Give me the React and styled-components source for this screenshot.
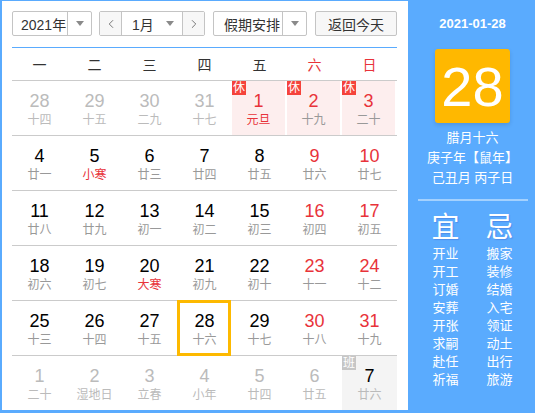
import React from 'react';
import styled, { createGlobalStyle, css } from 'styled-components';
import { ChevronLeft, ChevronRight } from 'lucide-react';

const FONT = '"Liberation Sans", Arial, "Noto Sans CJK SC", sans-serif';
const BLUE = '#5aabfe';
const RED = '#e8333a';

const GlobalStyle = createGlobalStyle`
  html, body {
    margin: 0;
    padding: 0;
    background: #fff;
    font-family: ${FONT};
  }
  * { box-sizing: border-box; }
`;

const Frame = styled.div`
  width: 535px;
  height: 413px;
  display: flex;
  border-left: 2px solid ${BLUE};
  border-top: 1px solid ${BLUE};
  border-bottom: 3px solid ${BLUE};
  overflow: hidden;
`;

const LeftPanel = styled.div`
  width: 406px;
  padding: 10px 11px 0 10px;
  display: flex;
  flex-direction: column;
`;

const Toolbar = styled.div`
  display: flex;
  height: 25px;
  gap: 7px;
`;

const Select = styled.div`
  width: ${(p) => p.width}px;
  height: 25px;
  border: 1px solid #c4c4c4;
  border-radius: 2px;
  display: flex;
  align-items: stretch;
  font-size: 14px;
  color: #333;
  background: #fff;
  margin-right: ${(p) => p.gapAfter || 0}px;
`;

const SelectLabel = styled.div`
  flex: 1;
  display: flex;
  align-items: center;
  white-space: nowrap;
  padding-left: ${(p) => p.pad || 10}px;
`;

const Caret = styled.div`
  flex: none;
  width: 24px;
  border-left: ${(p) => (p.divided ? '1px solid #c4c4c4' : 'none')};
  display: flex;
  align-items: center;
  justify-content: center;

  &::after {
    content: '';
    border-left: 4px solid transparent;
    border-right: 4px solid transparent;
    border-top: 5px solid #8a8a8a;
  }
`;

const StepButton = styled.div`
  flex: none;
  width: 22px;
  background: #f7f7f7;
  display: flex;
  align-items: center;
  justify-content: center;
  color: #666;
  ${(p) =>
    p.side === 'left'
      ? css`border-right: 1px solid #c4c4c4;`
      : css`border-left: 1px solid #c4c4c4;`}
`;

const TodayButton = styled.div`
  width: 82px;
  height: 25px;
  border: 1px solid #c4c4c4;
  border-radius: 2px;
  background: #f7f7f7;
  font-size: 14px;
  color: #333;
  display: flex;
  align-items: center;
  justify-content: center;
  margin-left: 1px;
`;

const WeekHeader = styled.div`
  margin-top: 11px;
  display: grid;
  grid-template-columns: repeat(7, 55px);
  height: 35px;
  border-top: 1px solid ${BLUE};
  border-bottom: 1px solid #cbcbcb;
`;

const WeekDay = styled.div`
  display: flex;
  align-items: center;
  justify-content: center;
  font-size: 14px;
  color: ${(p) => (p.weekend ? RED : '#333')};
`;

const Row = styled.div`
  display: grid;
  grid-template-columns: repeat(7, 55px);
  height: 55px;
  border-bottom: ${(p) => (p.last ? 'none' : '1px solid #cbcbcb')};
`;

const Cell = styled.div`
  position: relative;
  height: 54px;
  padding-top: 10px;
  display: flex;
  flex-direction: column;
  align-items: center;
  ${(p) =>
    p.kind === 'rest' &&
    css`
      background: #fdeeee;
      border-right: 2px solid #fff;
    `}
  ${(p) =>
    p.kind === 'work' &&
    css`
      background: #f4f4f4;
    `}
  ${(p) =>
    p.today &&
    css`
      &::after {
        content: '';
        position: absolute;
        top: -1px;
        bottom: -1px;
        left: 0;
        right: 1px;
        border: 3px solid #fdb900;
      }
    `}
`;

const DayNum = styled.div`
  font-size: 18px;
  line-height: 20px;
  color: ${(p) => p.color};
`;

const Lunar = styled.div`
  font-size: 12px;
  line-height: 16px;
  margin-top: 1px;
  color: ${(p) => p.color};
`;

const Badge = styled.div`
  position: absolute;
  top: 0;
  left: 0;
  width: 14px;
  height: 14px;
  font-size: 12px;
  line-height: 14px;
  text-align: center;
  color: #fff;
  background: ${(p) => (p.kind === 'rest' ? '#f5433b' : '#c6c6c6')};
`;

const RightPanel = styled.div`
  flex: 1;
  background: ${BLUE};
  color: #fff;
  display: flex;
  flex-direction: column;
  align-items: center;
  padding: 13px 0 0 2px;
`;

const DateTitle = styled.div`
  font-size: 13px;
  font-weight: bold;
  line-height: 20px;
`;

const BigDay = styled.div`
  margin-top: 15px;
  width: 75px;
  height: 74px;
  border-radius: 3px;
  background: #ffb800;
  box-shadow: 0 2px 4px rgba(0, 0, 0, 0.12);
  display: flex;
  align-items: center;
  justify-content: center;
  font-size: 56px;
`;

const InfoLines = styled.div`
  margin-top: 5px;
  font-size: 13px;
  line-height: 20px;
  text-align: center;
`;

const Divider = styled.div`
  margin-top: 11px;
  width: 110px;
  height: 2px;
  background: rgba(255, 255, 255, 0.45);
`;

const Almanac = styled.div`
  margin-top: 9px;
  display: grid;
  grid-template-columns: 54px 54px;
  justify-items: center;
`;

const AlmanacHead = styled.div`
  font-size: 28px;
  line-height: 35px;
  text-shadow: 1px 1px 1px rgba(60, 90, 200, 0.35);
`;

const AlmanacItem = styled.div`
  font-size: 13px;
  line-height: 18px;
`;

const GRAY = '#999';
const FADE = '#bbb';

const rows = [
  [
    ['28', '十四', 'fade'], ['29', '十五', 'fade'], ['30', '二九', 'fade'], ['31', '十七', 'fade'],
    ['1', '元旦', 'holiday', 'rest'], ['2', '十九', 'weekend', 'rest'], ['3', '二十', 'weekend', 'rest'],
  ],
  [
    ['4', '廿一'], ['5', '小寒', 'term'], ['6', '廿三'], ['7', '廿四'], ['8', '廿五'],
    ['9', '廿六', 'weekend'], ['10', '廿七', 'weekend'],
  ],
  [
    ['11', '廿八'], ['12', '廿九'], ['13', '初一'], ['14', '初二'], ['15', '初三'],
    ['16', '初四', 'weekend'], ['17', '初五', 'weekend'],
  ],
  [
    ['18', '初六'], ['19', '初七'], ['20', '大寒', 'term'], ['21', '初九'], ['22', '初十'],
    ['23', '十一', 'weekend'], ['24', '十二', 'weekend'],
  ],
  [
    ['25', '十三'], ['26', '十四'], ['27', '十五'], ['28', '十六', 'today'], ['29', '十七'],
    ['30', '十八', 'weekend'], ['31', '十九', 'weekend'],
  ],
  [
    ['1', '二十', 'fade'], ['2', '湿地日', 'fade'], ['3', '立春', 'fade'], ['4', '小年', 'fade'],
    ['5', '廿四', 'fade'], ['6', '廿五', 'fade'], ['7', '廿六', 'workday', 'work'],
  ],
];

const colorsFor = (type) => {
  switch (type) {
    case 'fade':
      return [FADE, FADE];
    case 'holiday':
      return [RED, RED];
    case 'weekend':
      return [RED, GRAY];
    case 'term':
      return ['#000', RED];
    case 'workday':
      return ['#000', FADE];
    default:
      return ['#000', GRAY];
  }
};

const yi = ['开业', '开工', '订婚', '安葬', '开张', '求嗣', '赴任', '祈福'];
const ji = ['搬家', '装修', '结婚', '入宅', '领证', '动土', '出行', '旅游'];

export default function App() {
  return (
    <>
      <GlobalStyle />
      <Frame>
        <LeftPanel>
          <Toolbar>
            <Select width={80}>
              <SelectLabel pad={8}>2021年</SelectLabel>
              <Caret divided />
            </Select>
            <Select width={106} gapAfter={1}>
              <StepButton side="left">
                <ChevronLeft size={14} strokeWidth={1.5} />
              </StepButton>
              <SelectLabel pad={10}>1月</SelectLabel>
              <Caret />
              <StepButton side="right">
                <ChevronRight size={14} strokeWidth={1.5} />
              </StepButton>
            </Select>
            <Select width={94}>
              <SelectLabel>假期安排</SelectLabel>
              <Caret divided />
            </Select>
            <TodayButton>返回今天</TodayButton>
          </Toolbar>

          <WeekHeader>
            {['一', '二', '三', '四', '五', '六', '日'].map((d, i) => (
              <WeekDay key={d} weekend={i > 4}>
                {d}
              </WeekDay>
            ))}
          </WeekHeader>

          {rows.map((row, ri) => (
            <Row key={ri} last={ri === rows.length - 1}>
              {row.map(([num, lunar, type, kind], ci) => {
                const [numColor, lunarColor] = colorsFor(type);
                return (
                  <Cell key={ci} kind={kind} today={type === 'today'}>
                    {kind === 'rest' && <Badge kind="rest">休</Badge>}
                    {kind === 'work' && <Badge kind="work">班</Badge>}
                    <DayNum color={numColor}>{num}</DayNum>
                    <Lunar color={lunarColor}>{lunar}</Lunar>
                  </Cell>
                );
              })}
            </Row>
          ))}
        </LeftPanel>

        <RightPanel>
          <DateTitle>2021-01-28</DateTitle>
          <BigDay>28</BigDay>
          <InfoLines>
            <div>腊月十六</div>
            <div>庚子年【鼠年】</div>
            <div>己丑月 丙子日</div>
          </InfoLines>
          <Divider />
          <Almanac>
            <AlmanacHead>宜</AlmanacHead>
            <AlmanacHead>忌</AlmanacHead>
            {yi.map((y, i) => (
              <React.Fragment key={y}>
                <AlmanacItem>{y}</AlmanacItem>
                <AlmanacItem>{ji[i]}</AlmanacItem>
              </React.Fragment>
            ))}
          </Almanac>
        </RightPanel>
      </Frame>
    </>
  );
}
